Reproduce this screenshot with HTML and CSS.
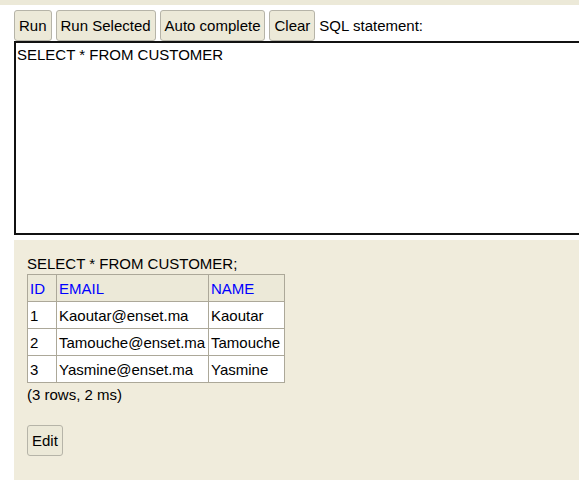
FILE: index.html
```html
<!DOCTYPE html>
<html>
<head>
<meta charset="utf-8">
<link rel="stylesheet" href="styles.css">
</head>
<body>
<div class="topbar"></div>
<div class="main">
  <div class="toolbar">
    <button class="btn">Run</button>
    <button class="btn">Run Selected</button>
    <button class="btn">Auto complete</button>
    <button class="btn">Clear</button>
    <span class="label">SQL statement:</span>
  </div>
  <div class="editor-wrap">
    <div class="editor">SELECT * FROM CUSTOMER</div>
  </div>
  <div class="result">
    <div class="query">SELECT * FROM CUSTOMER;</div>
    <table class="grid">
      <tr><th class="c1">ID</th><th class="c2">EMAIL</th><th class="c3">NAME</th></tr>
      <tr><td>1</td><td>Kaoutar@enset.ma</td><td>Kaoutar</td></tr>
      <tr><td>2</td><td>Tamouche@enset.ma</td><td>Tamouche</td></tr>
      <tr><td>3</td><td>Yasmine@enset.ma</td><td>Yasmine</td></tr>
    </table>
    <div class="stats">(3 rows, 2 ms)</div>
    <button class="btn edit">Edit</button>
  </div>
</div>
</body>
</html>
```
FILE: styles.css
```css
html, body {
  margin: 0;
  padding: 0;
  background: #ffffff;
  font-family: "Liberation Sans", Arial, sans-serif;
  font-size: 15px;
  color: #000;
  overflow: hidden;
}
.topbar {
  height: 5px;
  background: #ece9d8;
}
.main {
  padding-left: 14px;
}
.toolbar {
  display: flex;
  align-items: center;
  gap: 4px;
  padding-top: 5px;
  box-sizing: border-box;
  height: 36px;
}
.btn {
  font-family: "Liberation Sans", Arial, sans-serif;
  font-size: 15px;
  height: 31px;
  padding: 0 4px;
  background: #ece9d8;
  border: 1px solid #b6b4a8;
  border-radius: 3px;
  color: #000;
  margin: 0;
}
.editor-wrap {
  overflow: hidden;
}
.editor {
  height: 194px;
  width: calc(100% + 6px);
  border: 2px solid #111;
  box-sizing: border-box;
  padding: 3px 1px;
  white-space: pre;
  line-height: 18px;
}
.result {
  margin-top: 5px;
  background: #f0ecdc;
  height: 240px;
  padding: 14px 13px;
  box-sizing: border-box;
}
.query {
  line-height: 20px;
}
.grid {
  border-collapse: collapse;
  background: #ffffff;
}
.grid th, .grid td {
  border: 1px solid #aca899;
  height: 27px;
  padding: 0 2px;
  text-align: left;
  font-weight: normal;
  box-sizing: border-box;
}
.grid th {
  background: #ece9d8;
  color: #0000ff;
}
.c1 { width: 29px; }
.c2 { width: 152px; }
.c3 { width: 76px; }
.stats {
  margin-top: 3px;
  line-height: 18px;
}
.edit {
  margin-top: 21px;
}
```
